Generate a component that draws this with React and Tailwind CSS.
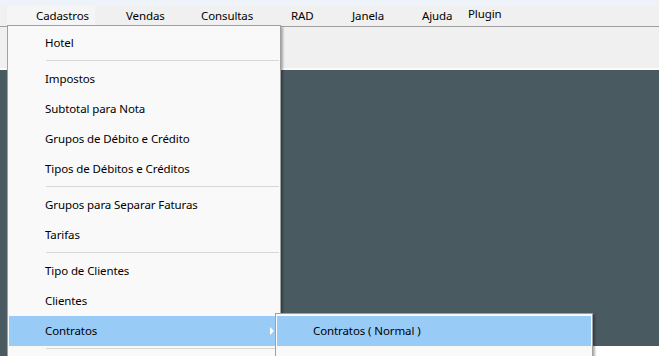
const menuBar = [
  { label: 'Vendas', w: 'w-[75px]' },
  { label: 'Consultas', w: 'w-[90px]' },
  { label: 'RAD', w: 'w-[61px]' },
  { label: 'Janela', w: 'w-[70px]' },
  { label: 'Ajuda', w: 'w-[46px]' },
];

const cadastros = [
  ['Hotel'],
  null,
  ['Impostos'],
  ['Subtotal para Nota'],
  ['Grupos de Débito e Crédito'],
  ['Tipos de Débitos e Créditos'],
  null,
  ['Grupos para Separar Faturas'],
  ['Tarifas'],
  null,
  ['Tipo de Clientes'],
  ['Clientes'],
  ['Contratos', true],
  null,
  [''],
];

function Separator() {
  return (
    <div className="h-[6px] pt-[2px]">
      <div className="ml-[38px] mr-[1px] h-px bg-[#d7d7d7]" />
    </div>
  );
}

function MenuItem({ label, active, submenu }) {
  return (
    <div
      className={`relative mx-px flex h-[30px] items-center pl-[36px] ${active ? 'bg-[#99cbf7]' : ''}`}
    >
      <span>{label}</span>
      {submenu && (
        <span className="absolute right-[5px] top-[11px] h-0 w-0 border-y-[4px] border-l-[4px] border-y-transparent border-l-white" />
      )}
    </div>
  );
}

export default function App() {
  return (
    <div
      className="relative h-[356px] w-[659px] overflow-hidden text-[11.5px] tracking-[-0.1px] text-black"
      style={{ fontFamily: '"Segoe UI", "Noto Sans", sans-serif' }}
    >
      <div className="flex h-full flex-col">
        <div className="h-[6px] bg-[#eef2f9]" />
        <div className="flex h-[20px] items-center bg-[#f0f0f0] pl-[7px]">
          <div className="flex h-full w-[88px] items-center bg-[#f5f5f5] pl-[29px]">Cadastros</div>
          <div className="ml-[31px] flex">
            {menuBar.map((m) => (
              <div key={m.label} className={m.w}>
                {m.label}
              </div>
            ))}
            <div className="-mt-[2px]">Plugin</div>
          </div>
        </div>
        <div className="h-px bg-[#a0a0a0]" />
        <div className="h-[41px] bg-[#f0f0f0]" />
        <div className="h-[2px] bg-[#fbfbfb]" />
        <div className="h-[276px] bg-[#4a5a61]" />
        <div className="flex flex-1">
          <div className="w-[7px] bg-[#4a5a61]" />
          <div className="flex-1 bg-white" />
        </div>
      </div>

      <div className="absolute left-[7px] top-[25px] w-[274px] border border-[#a0a0a0] bg-[#f9f9f9] pt-[2px] shadow-[2px_2px_2px_rgba(0,0,0,0.3)]">
        {cadastros.map((item, i) =>
          item ? (
            <MenuItem key={i} label={item[0]} active={item[1]} submenu={item[1]} />
          ) : (
            <Separator key={i} />
          ),
        )}
      </div>

      <div className="absolute left-[275px] top-[313px] w-[318px] border border-[#a0a0a0] bg-[#f9f9f9] pt-[2px] shadow-[2px_2px_2px_rgba(0,0,0,0.3)]">
        <MenuItem label="Contratos ( Normal )" active />
        <MenuItem label="" />
      </div>
    </div>
  );
}
